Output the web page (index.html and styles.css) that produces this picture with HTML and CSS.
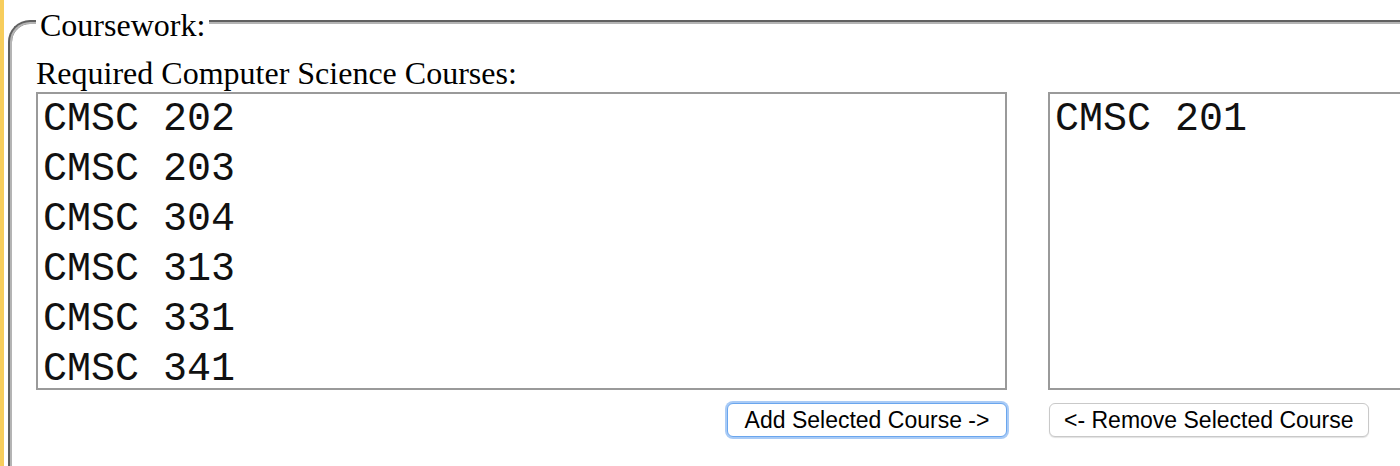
FILE: index.html
```html
<!DOCTYPE html>
<html lang="en">
<head>
<meta charset="utf-8">
<title>Coursework</title>
<link rel="stylesheet" href="styles.css">
</head>
<body>
<div class="page">
  <div class="strip"></div>
  <fieldset class="coursework">
    <legend class="legend">Coursework:</legend>
    <div class="label">Required Computer Science Courses:</div>
    <div class="columns">
      <div class="col col-left">
        <div class="listbox" role="listbox">
          <div class="option">CMSC 202</div>
          <div class="option">CMSC 203</div>
          <div class="option">CMSC 304</div>
          <div class="option">CMSC 313</div>
          <div class="option">CMSC 331</div>
          <div class="option">CMSC 341</div>
        </div>
        <div class="btn-row btn-row-right">
          <button class="btn btn-focus" type="button">Add Selected Course -&gt;</button>
        </div>
      </div>
      <div class="col col-right">
        <div class="listbox" role="listbox">
          <div class="option">CMSC 201</div>
        </div>
        <div class="btn-row">
          <button class="btn" type="button">&lt;- Remove Selected Course</button>
        </div>
      </div>
    </div>
  </fieldset>
</div>
</body>
</html>
```

FILE: styles.css
```css
html, body {
  margin: 0;
  padding: 0;
  background: #ffffff;
  overflow: hidden;
}

.page {
  display: flex;
  align-items: flex-start;
  width: 2100px;
  height: 466px;
  overflow: hidden;
}

.strip {
  width: 4px;
  height: 466px;
  flex: none;
  background: #f7cd5c;
}

.coursework {
  flex: none;
  width: 2000px;
  margin: -1px 0 0 4px;
  padding: 0 24px 60px 24px;
  border: 4px groove #b4b4b4;
  border-radius: 22px;
  font-family: "Liberation Serif", "Times New Roman", serif;
  font-size: 32px;
  color: #000;
}

.legend {
  padding: 8px 4px 0 4px;
  line-height: 37px;
  font-size: 32px;
}

.label {
  line-height: 37px;
  margin-top: 11px;
}

.columns {
  display: flex;
  gap: 41px;
}

.col {
  display: flex;
  flex-direction: column;
}

.col-left {
  width: 971px;
}

.col-right {
  width: 971px;
}

.listbox {
  height: 293px;
  border: 2px solid #9a9a9a;
  padding: 1px 5px 0 5px;
  overflow: hidden;
  font-family: "Liberation Mono", "Courier New", monospace;
  font-size: 40px;
  line-height: 50px;
  color: #111;
}

.option {
  height: 50px;
  white-space: nowrap;
}

.option:nth-child(6) {
  height: 42px;
}

.btn-row {
  display: flex;
  margin-top: 13px;
}

.btn-row-right {
  justify-content: flex-end;
}

.btn {
  height: 34px;
  padding: 0 14px;
  margin: 0 0 0 1px;
  border: 1px solid #c9c9c9;
  border-radius: 6px;
  background: #ffffff;
  box-shadow: 0 1px 1px rgba(0, 0, 0, 0.12);
  font-family: "Liberation Sans", Arial, sans-serif;
  font-size: 23px;
  color: #000;
  line-height: 32px;
}

.btn-focus {
  margin: 0;
  width: 280px;
  padding: 0;
  border: 1px solid #6aa6ee;
  box-shadow: 0 0 0 2px #a9cbf6;
}
```
